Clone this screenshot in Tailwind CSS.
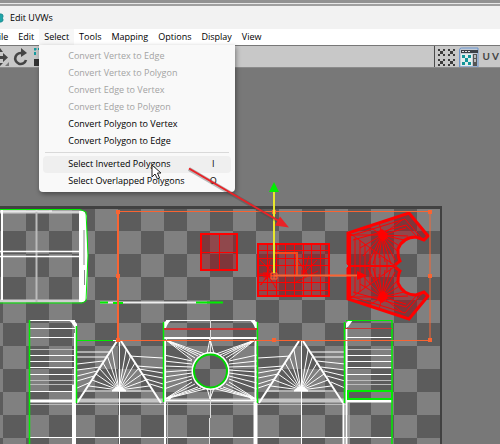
<!DOCTYPE html>
<html lang="en">
<head>
  <meta charset="UTF-8">
  <meta name="viewport" content="width=device-width, initial-scale=1.0">
  <title>Edit UVWs</title>
  <script src="https://cdn.jsdelivr.net/npm/@tailwindcss/browser@4"></script>
</head>
<body class="relative flex min-h-screen flex-col overflow-hidden bg-[#787878] font-['Open_Sans','Noto_Sans',sans-serif] text-[9px] font-medium text-black">
  <div class="h-1 border-b border-[#e8e8e8] bg-[#929292]"></div>
  <header class="flex h-[25px] items-center gap-[6px] border-t-2 border-[#a0a0a0] bg-[#f2f2f2]">
    <svg class="h-3 w-1" viewBox="0 0 4 12" aria-hidden="true">
      <path d="M0 2h1q2 0 2 2t-1 2q1 .5 1 2t-2 2H0" fill="#20a5a8" stroke="#178b90"/>
    </svg>
    <h1 class="leading-4">Edit UVWs</h1>
  </header>

  <nav class="relative z-20 h-4 bg-white">
    <ul class="-ml-[11px] flex h-4 items-center whitespace-nowrap leading-4">
      <li><button class="block h-4 px-[5px]">File</button></li>
      <li><button class="block h-4 px-[5px]">Edit</button></li>
      <li class="relative">
        <button class="block h-4 bg-[#f7f7f7] px-[5px]" aria-expanded="true">Select</button>
        <div class="absolute top-4 left-0 w-[196px] rounded-b-sm bg-[#f9f9f9] px-1 pt-[2px] pb-[2px] shadow-[1px_2px_5px_rgba(0,0,0,0.4)]" role="menu">
          <button class="block h-[17px] w-full px-[25px] text-left leading-4 text-[#a3a3a3]" role="menuitem" disabled>Convert Vertex to Edge</button>
          <button class="block h-[17px] w-full px-[25px] text-left leading-4 text-[#a3a3a3]" role="menuitem" disabled>Convert Vertex to Polygon</button>
          <button class="block h-[17px] w-full px-[25px] text-left leading-4 text-[#a3a3a3]" role="menuitem" disabled>Convert Edge to Vertex</button>
          <button class="block h-[17px] w-full px-[25px] text-left leading-4 text-[#a3a3a3]" role="menuitem" disabled>Convert Edge to Polygon</button>
          <button class="block h-[17px] w-full px-[25px] text-left leading-4" role="menuitem">Convert Polygon to Vertex</button>
          <button class="block h-[17px] w-full px-[25px] text-left leading-4" role="menuitem">Convert Polygon to Edge</button>
          <hr class="mx-[2px] my-[3px] border-[#d9d9d9]">
          <button class="flex h-[17px] w-full justify-between rounded-sm bg-[#efefef] pr-[14px] pl-[25px] leading-4" role="menuitem"><span>Select Inverted Polygons</span><kbd class="w-2 text-center font-['Open_Sans',sans-serif] text-[9px]">I</kbd></button>
          <button class="flex h-[17px] w-full justify-between pr-[14px] pl-[25px] leading-4" role="menuitem"><span>Select Overlapped Polygons</span><kbd class="w-2 text-center font-['Open_Sans',sans-serif] text-[9px]">O</kbd></button>
        </div>
      </li>
      <li><button class="block h-4 px-[5px]">Tools</button></li>
      <li><button class="block h-4 px-[5px]">Mapping</button></li>
      <li><button class="block h-4 px-[5px]">Options</button></li>
      <li><button class="block h-4 px-[5px]">Display</button></li>
      <li><button class="block h-4 px-[5px]">View</button></li>
    </ul>
  </nav>

  <div class="flex h-[23px] items-center justify-between border-t border-b border-t-[#777] border-b-[#8b8b8b] bg-[#c8c8c8]">
    <div class="flex items-center">
      <button aria-label="Move">
        <svg class="h-5 w-[10px]" viewBox="0 0 10 20" aria-hidden="true">
          <path d="M0 9h3V6l5 4.500-5 4.500v-3H0zM-3 5H3L0 1zM-3 16H3L0 19z" fill="#444"/>
          <path d="M9 15v4H5z" fill="#777"/>
        </svg>
      </button>
      <button aria-label="Rotate">
        <svg class="h-5 w-[22px]" viewBox="0 0 22 20" aria-hidden="true">
          <path d="M13 6.500A5.500 5.500 0 1 0 16 13" fill="none" stroke="#444" stroke-width="2.600"/>
          <path d="M11 1l6 5-6 4z" fill="#444"/>
        </svg>
      </button>
      <button aria-label="Scale">
        <svg class="h-5 w-3" viewBox="0 0 12 20" aria-hidden="true">
          <path d="M3 8V2h8" fill="none" stroke="#179b9f" stroke-width="2" stroke-dasharray="3 1.500"/>
          <path d="M2 12h8v7H2z" fill="#333"/>
        </svg>
      </button>
    </div>
    <div class="flex h-full items-center border-l border-[#4b4b4b]">
      <button aria-label="Checker pattern">
        <svg class="h-5 w-6" viewBox="0 0 24 20" aria-hidden="true">
          <defs>
            <path id="dots" d="M0 0h2v2H0zM5 0h2v2H5zM2 2h3v3H2zM0 5h2v2H0zM5 5h2v2H5z"/>
          </defs>
          <g fill="#3c3c3c">
            <use href="#dots" x="3" y="2"/><use href="#dots" x="13" y="2"/>
            <use href="#dots" x="3" y="12"/><use href="#dots" x="13" y="12"/>
          </g>
        </svg>
      </button>
      <button aria-label="Texture window">
        <svg class="h-5 w-5" viewBox="0 0 20 20" aria-hidden="true">
          <path d="M.5 20V3q0-2 2-2H19v19z" fill="#c2cad5" stroke="#6b95cf"/>
          <path d="M2 3h17v3H2z" fill="#3b3f46"/>
          <path d="M3 4h2v1H3zM6 4h2v1H6zM9 4h2v1H9z" fill="#ddd"/>
          <path d="M2 7h11v12H2z" fill="#e4eeee"/>
          <path d="M3 8h3v3H3zM9 8h3v3H9zM6 11h3v4H6zM3 15h3v3H3zM9 15h3v3H9z" fill="#129599"/>
          <path d="M14 7h4v12h-4z" fill="#555"/>
          <path d="M15 8h2v3h-2zM15 12h2v3h-2z" fill="#bbb"/>
        </svg>
      </button>
      <span class="pr-px pl-1 font-[Lato,sans-serif] text-[10px] font-bold whitespace-nowrap text-[#444]">U V</span>
    </div>
  </div>

  <main class="flex-1 overflow-hidden bg-[#787878]">
    <svg class="block h-[376px] w-[500px]" viewBox="0 68 500 376" role="img" aria-label="UV layout">
      <defs>
        <pattern id="checker" x="3" y="208" width="46" height="46" patternUnits="userSpaceOnUse">
          <path d="M0 0h46v46H0z" fill="#808080"/>
          <path d="M23 0h23v23H23zM0 23h23v23H0z" fill="#5c5c5c"/>
        </pattern>
        <!-- fan of edges under a triangle, origin at its hub -->
        <g id="fan" fill="none" stroke="#fff">
          <path d="M0 0L-30-4M0 0L-27-10M0 0L-23-16M0 0L-20-22M0 0L-16-27M0 0L-12-35M0 0L-7-40M0 0L7-40M0 0L12-35M0 0L16-27M0 0L20-22M0 0L23-16M0 0L27-10M0 0L30-4M-34 1H34M.5-50V54"/>
          <path d="M-42 13L-2-49M2-49L42 13" stroke-width="2"/>
          <path d="M-7 1l5-4h4l5 4z" fill="#fff"/>
        </g>
        <g id="rungs" fill="none" stroke="#fff">
          <path d="M0 .5H46M0 35.500H46M0 41.500H46M0 47.500H46M0 71.500H46"/>
          <path d="M0 8.500H46M0 17.500H46M0 54.500H46"/>
          <path d="M0 29.500H46M0 60.500H46M0 64.500H46" stroke="#bbb"/>
        </g>
        <!-- upper half of the curved part -->
        <g id="horn">
          <path d="M348 233L409 213L428 236L424 240L416 237Q403 237 398 249Q398 258 400 261L394 266H360L348 264z" fill="#a01018" fill-opacity=".5"/>
          <path d="M348 264V233L409 213L428 236L424 240L416 237Q403 237 398 249Q398 258 400 261L395 265" fill="none" stroke="#f00" stroke-width="3"/>
          <path d="M350 236L405 219L423 240M353 240L406 225L418 238M348 232L394 265M360 240V266M365 244V266M370 248V266M375 252V266M380 256V266M387 260V266M355 238V266M348 265.500H395" stroke="#f00" fill="none"/>
          <path d="M382 235L352 235M382 235L360 248M382 235L363 256M382 235L368 264M382 235L373 264M382 235L379 258M382 235L385 262M382 235L391 264M382 235L395 260M382 235L397 251M382 235L398 245M382 235L404 240M382 235L408 236M382 235L406 228M382 235L402 220M382 235L379 222M382 235L368 226" stroke="#f00" fill="none"/>
          <path d="M349 234V265" stroke="#f00" stroke-width="4"/>
          <path d="M377 232l5-3 5 4 1 4-4 4-5-3z" fill="#f00"/>
        </g>
      </defs>

      <!-- tile area -->
      <path d="M0 206H442V444H0z" fill="#414141"/>
      <path d="M0 209H440V444H0z" fill="url(#checker)"/>

      <!-- top left shell -->
      <g fill="none" stroke="#fff">
        <path d="M0 212H82M0 301H82" stroke="#d0d0d0" stroke-width="3"/>
        <path d="M2 210V300" stroke-width="2"/>
        <path d="M36.500 210V302" stroke="#bbb" stroke-width="2"/>
        <path d="M0 251.500H87M0 256.500H87" stroke-width="1.500"/>
        <path d="M79 211h5l3 5v25l1 15-1 42-3 4h-5z" fill="#fff" stroke="none"/>
        <path d="M84 230v35M84.500 270v15" stroke="#888"/>
        <path d="M0 209.500H80L86 212 88 255 86 301 82 303H0" stroke="#0e0"/>
        <path d="M0 211H52"/>
      </g>
      <path d="M100 302.500H207" stroke="#eee" stroke-width="2"/>
      <path d="M100 302.500h8M113 303h10M196 302.500H223" stroke="#0e0" stroke-width="2"/>

      <!-- left and right ladders -->
      <use href="#rungs" x="29" y="320"/>
      <use href="#rungs" x="346" y="320"/>
      <path d="M68 320h6l3 4v9h-2v-5l-4-6zM346 328v-5l3-3h4l-5 7z" fill="#fff"/>

      <!-- horizontal bars -->
      <g fill="none">
        <path d="M77 340.500H345" stroke="#fff"/>
        <path d="M29 401H77M346 401H392" stroke="#fff" stroke-width="3"/>
        <path d="M77 400.500H345" stroke="#c4c4c4" stroke-width="4"/>
        <path d="M29 404.500H346" stroke="#bbb"/>
        <path d="M164 400.500H257" stroke="#fff"/>
        <path d="M29 437.500H392" stroke="#fff"/>
      </g>

      <use href="#fan" x="119" y="390"/>
      <use href="#fan" x="301" y="390"/>

      <!-- edges from the outer columns to the triangles -->
      <g fill="none" stroke="#fff">
        <path d="M77 352H110M77 357H106M77 364L103 361M77 370L100 367M77 376L97 371M77 381L94 376M77 388L91 382"/>
        <path d="M345 352H311M345 357H314M345 364L317 361M345 370L321 367M345 376L324 371M345 381L327 376M345 388L331 382"/>
        <path d="M129 356L163 358M137 366L163 368M139 369L163 373M142 374L163 378M146 379L163 384M150 384L163 388"/>
        <path d="M291 356L258 358M283 366L258 368M281 369L258 373M278 374L258 378M274 379L258 384M270 384L258 388"/>
      </g>

      <!-- centre shell with the round hole -->
      <g fill="none" stroke="#fff">
        <path d="M166 320.500H255"/>
        <path d="M164 329v-7l4-2h4q-4 2-6 8zM257 329v-7l-4-2h-4q4 2 6 8z" fill="#fff" stroke="none"/>
        <path d="M164 338H257" stroke-width="2"/>
        <path d="M210.500 320V354M210.500 388V418M209.500 418V444" stroke="#ddd"/>
        <path d="M166 340L195 358M166 340L198 356M166 340L201 355M166 340L205 354M166 340L192 360"/>
        <path d="M255 340L226 358M255 340L223 356M255 340L220 355M255 340L216 354M255 340L229 360"/>
        <path d="M165 399L195 384M165 399L198 387M165 399L201 388M165 399L205 389M165 399L192 382"/>
        <path d="M256 399L226 384M256 399L223 387M256 399L220 388M256 399L216 389M256 399L229 382"/>
        <path d="M207 354L210 339L214 354M207 388L210 399L214 388"/>
        <path d="M164 355L192 361M164 361L192 364M164 366L192 367M164 372L192 370M164 377L192 373M164 383L192 376M164 389L192 379"/>
        <path d="M257 355L229 361M257 361L229 364M257 366L229 367M257 372L229 370M257 377L229 373M257 383L229 376M257 389L229 379"/>
        <circle cx="210.500" cy="371" r="18" stroke-width="2"/>
      </g>
      <circle cx="210.500" cy="371" r="16.500" fill="none" stroke="#00d800" stroke-width="2"/>
      <path d="M165 399l8-4-3 5zM256 399l-8-4 3 5z" fill="#fff"/>

      <!-- columns -->
      <g fill="none" stroke="#fff">
        <path d="M74 385V444" stroke-width="4"/>
        <path d="M75 333V385" stroke-width="2"/>
        <path d="M165 340V444" stroke-width="2"/>
        <path d="M167.500 402V444" stroke="#bbb"/>
        <path d="M255.500 340V402" stroke-width="2"/>
        <path d="M255.500 402V444" stroke-width="4"/>
        <path d="M346.500 328V444" stroke-width="2"/>
        <path d="M343.500 403V444" stroke-width="2"/>
        <path d="M349 403V444" stroke="#bbb"/>
      </g>
      <g fill="none" stroke="#0e0">
        <path d="M29.500 320V444M392 320V444M344.500 322V403" stroke-width="1.500"/>
        <path d="M76.500 326V403M163.500 322V402M257.500 322V403" stroke-width="1.500"/>
        <path d="M77 340.500h36M346 320.500h46"/>
        <path d="M348 391h44v8h-44z" stroke-width="2"/>
      </g>
      <path d="M164 329H257" stroke="#c33" stroke-width="2"/>
      <path d="M345 328.500H392" stroke="#c33"/>

      <!-- selected polygons -->
      <g fill="#a01018" fill-opacity=".5" stroke="#f00">
        <path d="M201 234h36v36h-36z" stroke-width="2"/>
        <path d="M219.500 234v36M201 252.500h36" fill="none"/>
        <path d="M258 244h71v52h-71z" stroke-width="2"/>
        <path d="M267.500 244v52M276.500 244v52M285.500 244v52M294.500 244v52M303.500 244v52M311.500 244v52M320.500 244v52M258 250.500h71M258 258.500h71M258 265.500h71M258 275.500h71M258 282.500h71M258 290.500h71" fill="none"/>
        <path d="M260 260l16 16M270 260l-3 15M277 262l-11 12M258 274h14M260 285l15-15M297 259l11 16M309 256l-6 20M317 260l-16 16M296 282l22-11M268 275l-7 10M268 275l8 13" fill="none"/>
        <path d="M263 272h8v6h-8zM301 270h6v5h-6z" fill="#f00" stroke="none"/>
      </g>
      <use href="#horn"/>
      <use href="#horn" transform="matrix(1 0 0 -1 0 532)"/>

      <!-- transform gizmo -->
      <g fill="none" stroke="#f96432">
        <path d="M118 211.500H430M430 340.500H118"/>
        <path d="M430 211V340"/>
        <path d="M118 211V340" stroke-width="2"/>
        <path d="M274 253H297V275" stroke-width="2" stroke="#f84a1c"/>
        <path d="M274 275.500H358" stroke-width="2"/>
        <path d="M271 273h6v6h-6zM271 276h6M274 273v6"/>
      </g>
      <path d="M357 271l10 4.500-10 4.500z" fill="#f00"/>
      <path d="M116 210h4v4h-4zM116 274h4v4h-4zM116 338h4v4h-4zM272 210h4v4h-4zM272 338h4v4h-4zM428 210h4v4h-4zM428 274h4v4h-4zM428 338h4v4h-4z" fill="#f96432"/>
      <path d="M274 190V273" stroke="#e8e82c" stroke-width="2"/>
      <path d="M274 182l5 10h-10z" fill="#0e0"/>
    </svg>
  </main>

  <!-- callout arrow and mouse pointer, drawn over the menu -->
  <svg class="pointer-events-none absolute top-0 left-0 z-30 h-[444px] w-[500px]" viewBox="0 0 500 444" aria-hidden="true">
    <path d="M189 169L278 221" stroke="#444" stroke-opacity=".35" stroke-width="4"/>
    <path d="M189 168.500L278 220.500" stroke="#ea2227" stroke-width="2"/>
    <path d="M289 227.500l-14-2 5-9z" fill="#ea2227"/>
    <path d="M152 165v12l3-3 2.500 5 2-1-2-5h3.500z" fill="#fff" stroke="#222"/>
  </svg>
</body>
</html>
